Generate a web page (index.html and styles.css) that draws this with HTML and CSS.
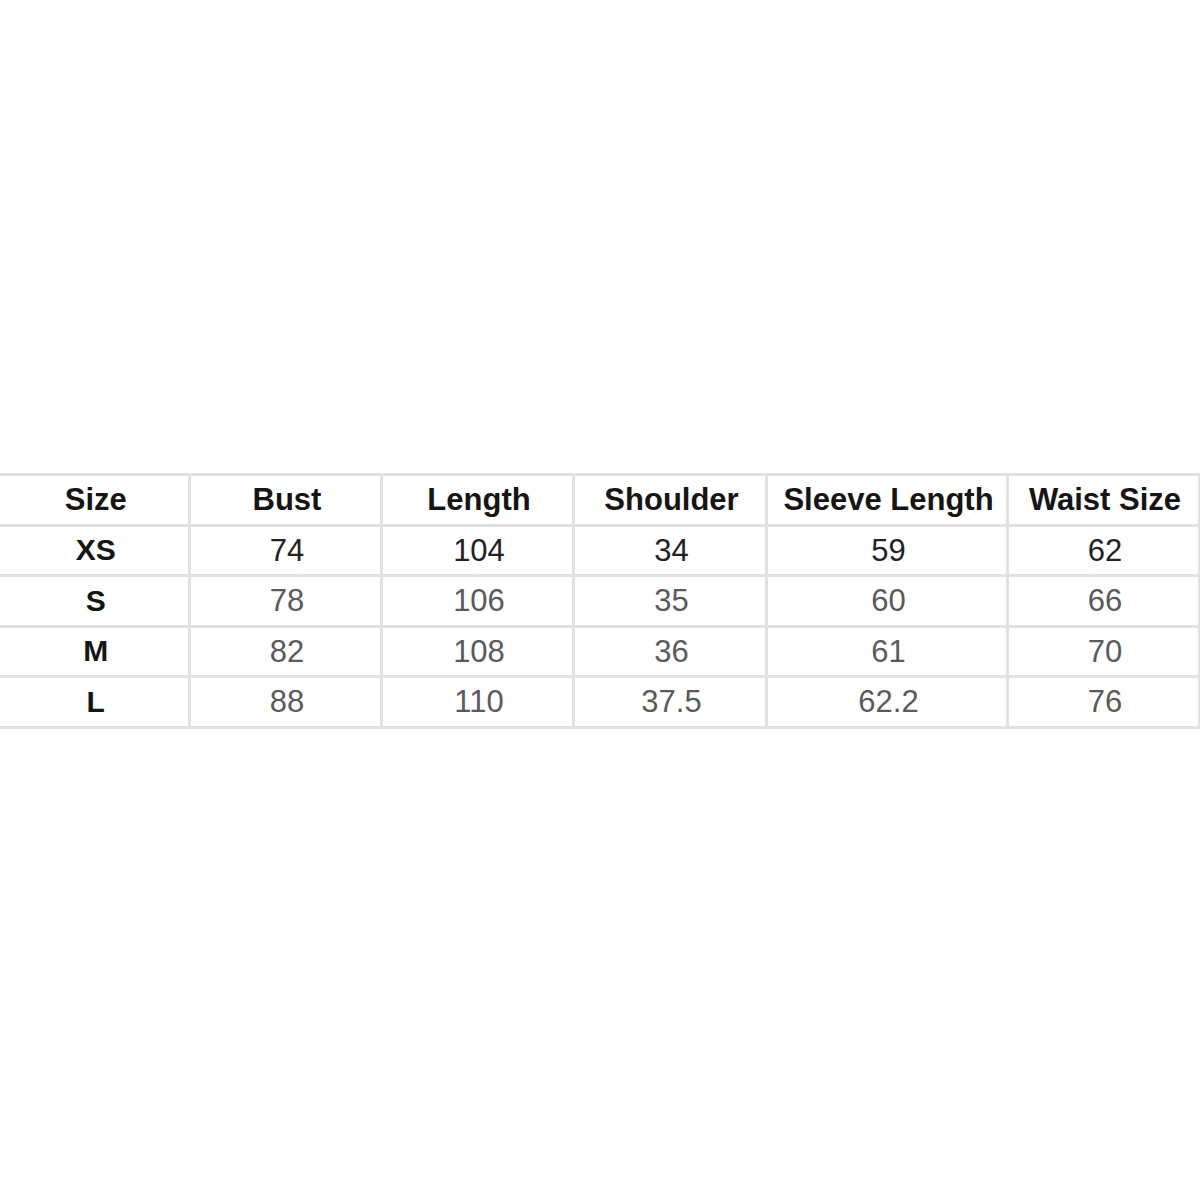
FILE: index.html
```html
<!DOCTYPE html>
<html>
<head>
<meta charset="utf-8">
<link rel="stylesheet" href="styles.css">
</head>
<body>
<div class="page">
<table class="sizes">
<colgroup>
<col class="c1"><col class="c2"><col class="c3"><col class="c4"><col class="c5"><col class="c6">
</colgroup>
<thead>
<tr><th>Size</th><th>Bust</th><th>Length</th><th>Shoulder</th><th>Sleeve Length</th><th>Waist Size</th></tr>
</thead>
<tbody>
<tr class="dark"><th>XS</th><td>74</td><td>104</td><td>34</td><td>59</td><td>62</td></tr>
<tr><th>S</th><td>78</td><td>106</td><td>35</td><td>60</td><td>66</td></tr>
<tr><th>M</th><td>82</td><td>108</td><td>36</td><td>61</td><td>70</td></tr>
<tr><th>L</th><td>88</td><td>110</td><td>37.5</td><td>62.2</td><td>76</td></tr>
</tbody>
</table>
</div>
</body>
</html>
```
FILE: styles.css
```css
html, body {
  margin: 0;
  padding: 0;
  background: #ffffff;
}
.page {
  padding-top: 473px;
}
.sizes {
  border-collapse: collapse;
  table-layout: fixed;
  width: 1199px;
  font-family: "Liberation Sans", Arial, sans-serif;
}
.c1 { width: 189px; }
.c2 { width: 192px; }
.c3 { width: 192px; }
.c4 { width: 193px; }
.c5 { width: 241px; }
.c6 { width: 192px; }
.sizes th, .sizes td {
  border: 3px solid #e1e1e1;
  height: 47.5px;
  padding: 0 0 0 4px;
  text-align: center;
  vertical-align: middle;
  line-height: 1;
}
.sizes tr > :first-child {
  border-left: none;
}
.sizes th {
  font-weight: bold;
  font-size: 31px;
  color: #151515;
}
.sizes tbody th {
  font-size: 30px;
}
.sizes td {
  font-size: 31px;
  color: #5a5a5a;
}
.sizes tr.dark td {
  color: #222222;
}
```
